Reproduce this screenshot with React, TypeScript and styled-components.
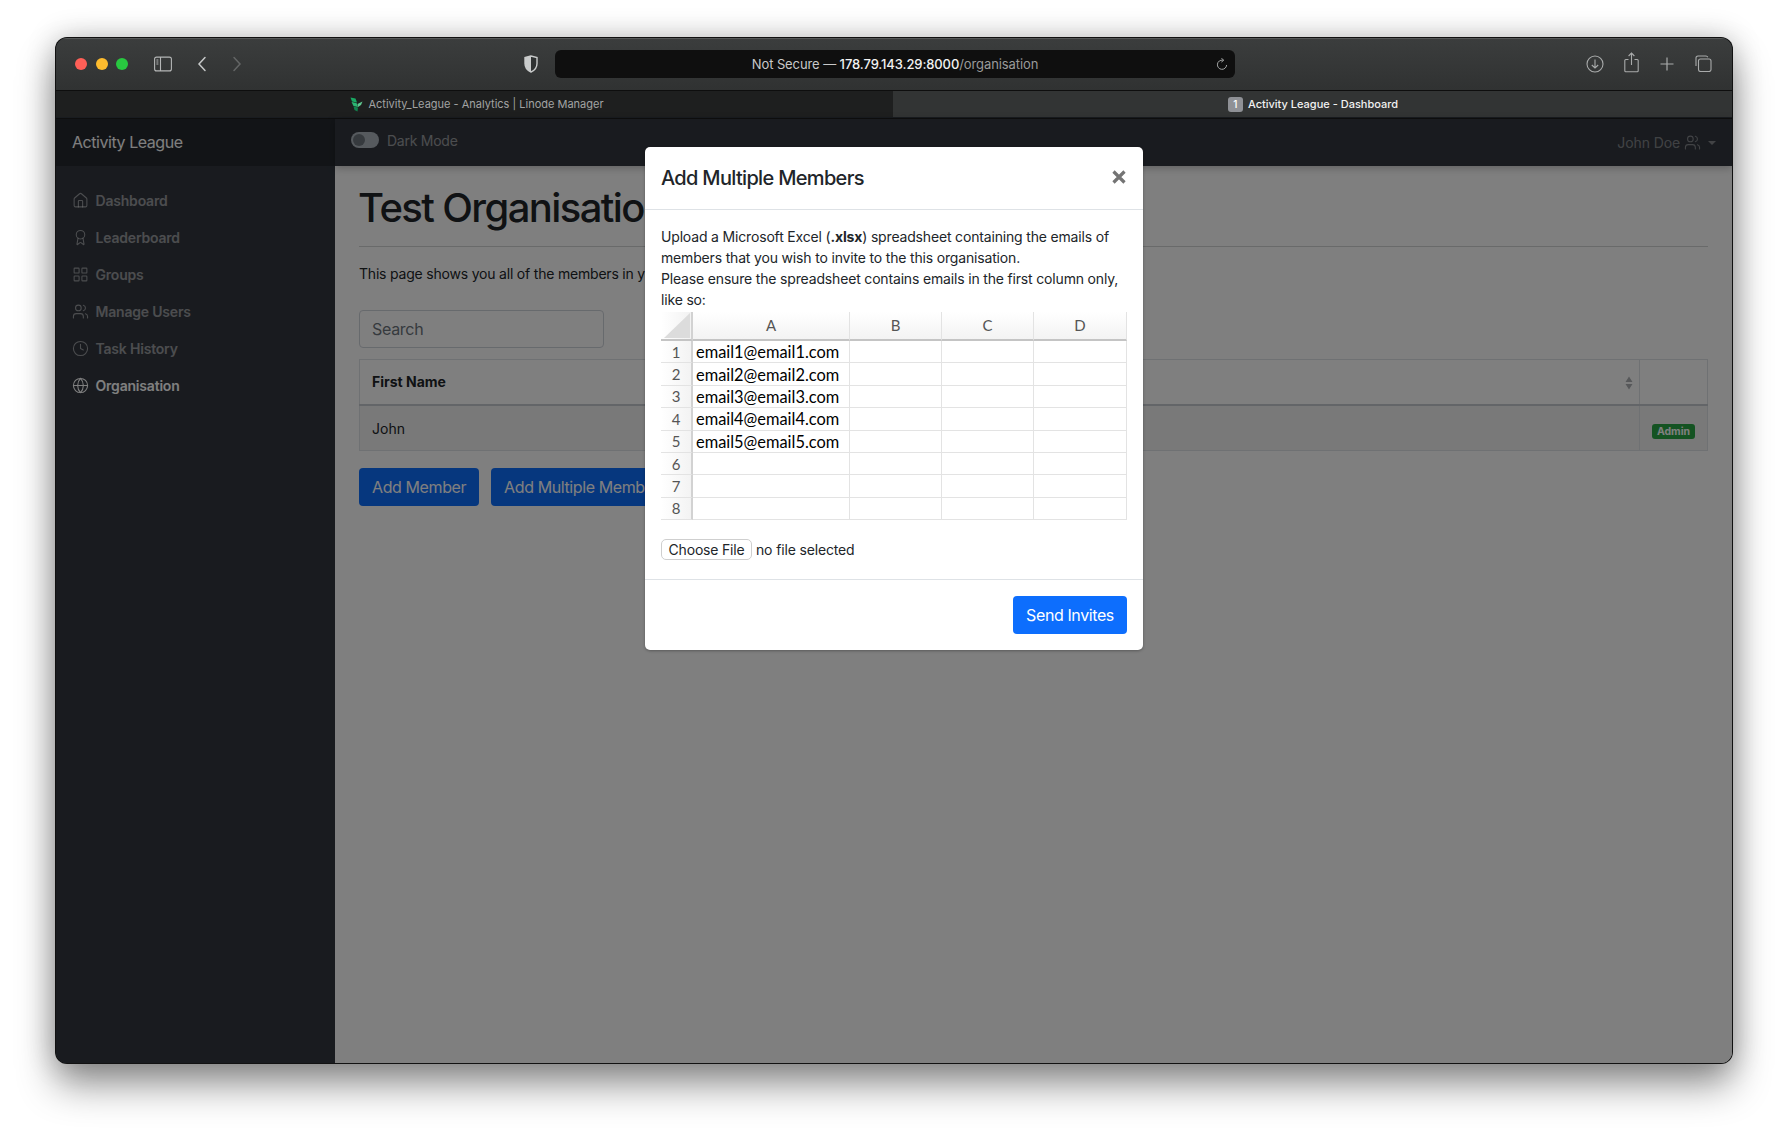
import styled, { createGlobalStyle } from "styled-components";
import { Award, Clock, Globe, House, LayoutGrid, Users } from "lucide-react";

const SANS = `Inter, "Liberation Sans", sans-serif`;

const GlobalStyle = createGlobalStyle`
  html, body {
    margin: 0;
    background: #ffffff;
    font-family: ${SANS};
  }
  * {
    box-sizing: border-box;
  }
`;

const NAV_ITEMS = [
  { label: "Dashboard", icon: <House /> },
  { label: "Leaderboard", icon: <Award /> },
  { label: "Groups", icon: <LayoutGrid /> },
  { label: "Manage Users", icon: <Users /> },
  { label: "Task History", icon: <Clock /> },
  { label: "Organisation", icon: <Globe />, active: true },
];

const SHEET_COLS = ["A", "B", "C", "D"];
const SHEET_ROWS = [1, 2, 3, 4, 5, 6, 7, 8];

function Chrome() {
  return (
    <TitleBar>
      <Lights>
        <Light color="#ff5f57" />
        <Light color="#febc2e" />
        <Light color="#28c840" />
      </Lights>
      <ChromeIcon width="18" height="16" viewBox="0 0 18 16" $gap={26}>
        <rect x="0.6" y="1.1" width="16.8" height="13.8" rx="2" fill="none" stroke="#b4b6b6" strokeWidth="1.1" />
        <path d="M6.5 1v14" stroke="#b4b6b6" strokeWidth="1.1" />
        <path d="M2.4 4h2M2.4 6h2M2.4 8h2" stroke="#b4b6b6" strokeWidth="1" />
      </ChromeIcon>
      <ChromeIcon width="10" height="16" viewBox="0 0 10 16" $gap={25}>
        <path d="M8 1.5 2 8l6 6.5" fill="none" stroke="#c6c8c8" strokeWidth="1.5" strokeLinecap="round" />
      </ChromeIcon>
      <ChromeIcon width="10" height="16" viewBox="0 0 10 16" $gap={25}>
        <path d="M2 1.5 8 8l-6 6.5" fill="none" stroke="#636565" strokeWidth="1.5" strokeLinecap="round" />
      </ChromeIcon>
      <ChromeIcon width="16" height="18" viewBox="0 0 16 18" $gap={281}>
        <path d="M8 1 2 2.6v6C2 12.6 4.6 15.6 8 17c3.400-1.400 6-4.400 6-8.400v-6z" fill="#2f3232" stroke="#c9cbcb" strokeWidth="1.4" />
        <path d="M8 1 2 2.6v6C2 12.6 4.600 15.600 8 17z" fill="#c9cbcb" />
      </ChromeIcon>
      <UrlBar>
        <UrlText>
          Not Secure — <UrlHost>178.79.143.29:8000</UrlHost>
          <UrlPath>/organisation</UrlPath>
        </UrlText>
        <ReloadIcon width="12" height="13" viewBox="0 0 12 13">
          <path d="M6.800 2.200A4.600 4.600 0 1 0 10.600 7" fill="none" stroke="#a4a6a6" strokeWidth="1" />
          <path d="M5.400 0.300 7.800 2.200 5.400 4.100" fill="none" stroke="#a4a6a6" strokeWidth="1" />
        </ReloadIcon>
      </UrlBar>
      <ChromeActions>
        <svg width="18" height="18" viewBox="0 0 18 18">
          <circle cx="9" cy="9" r="8" fill="none" stroke="#a9abab" strokeWidth="1.1" />
          <path d="M9 4.500v8.500M5.800 10 9 13l3.200-3" fill="none" stroke="#a9abab" strokeWidth="1.1" />
        </svg>
        <ShareIcon width="15" height="21" viewBox="0 0 15 21">
          <path d="M4.500 7.500H1.800a1 1 0 0 0-1 1v10.200a1 1 0 0 0 1 1h11.400a1 1 0 0 0 1-1V8.500a1 1 0 0 0-1-1h-2.700" fill="none" stroke="#a9abab" strokeWidth="1.1" />
          <path d="M7.500 13V1.200M4.600 4 7.500 1l2.900 3" fill="none" stroke="#a9abab" strokeWidth="1.1" />
        </ShareIcon>
        <svg width="16" height="16" viewBox="0 0 16 16">
          <path d="M8 1.500v13M1.500 8h13" stroke="#a9abab" strokeWidth="1.2" />
        </svg>
        <svg width="17" height="17" viewBox="0 0 17 17">
          <rect x="3.500" y="4" width="12.500" height="12.500" rx="2" fill="none" stroke="#a9abab" strokeWidth="1.1" />
          <path d="M1 11V3a2 2 0 0 1 2-2h8a2 2 0 0 1 1.800 1.200" fill="none" stroke="#a9abab" strokeWidth="1.1" />
        </svg>
      </ChromeActions>
    </TitleBar>
  );
}

function Tabs() {
  return (
    <TabRow>
      <InactiveTab>
        <svg width="13" height="15" viewBox="0 0 13 15">
          <path d="M0.500 0.500 5.500 1.500 7 5.500 2 4.500z" fill="#1aa863" />
          <path d="M1.500 5 6.500 6 8 10 3.500 9z" fill="#2bb673" />
          <path d="M3.500 9.500 8 10.500 7.500 14.500 4.500 13z" fill="#12814d" />
          <path d="M7.500 7 12.500 4.500 11 8 8 10z" fill="#5fc790" />
        </svg>
        Activity_League - Analytics | Linode Manager
      </InactiveTab>
      <ActiveTab>
        <TabBadge>1</TabBadge>
        Activity League - Dashboard
      </ActiveTab>
    </TabRow>
  );
}

function Sidebar() {
  return (
    <SideColumn>
      <Brand>Activity League</Brand>
      <NavList>
        {NAV_ITEMS.map((item) => (
          <NavItem key={item.label} $active={item.active}>
            {item.icon}
            {item.label}
          </NavItem>
        ))}
      </NavList>
    </SideColumn>
  );
}

function Page() {
  return (
    <MainColumn>
      <TopNav>
        <Toggle />
        <ToggleLabel>Dark Mode</ToggleLabel>
        <UserMenu>
          John Doe <Users />
          <Caret />
        </UserMenu>
      </TopNav>
      <Content>
        <PageTitle>Test Organisation</PageTitle>
        <Rule />
        <Lead>This page shows you all of the members in your organisation.</Lead>
        <SearchInput placeholder="Search" />
        <MembersTable>
          <thead>
            <tr>
              <HeadCell>First Name</HeadCell>
              <HeadCell>
                <SortIcon width="8" height="14" viewBox="0 0 8 14">
                  <path d="M4 0.500 7.500 6H0.500zM4 13.500 0.500 8h7z" fill="#aeb1b4" />
                </SortIcon>
              </HeadCell>
              <HeadCell />
            </tr>
          </thead>
          <tbody>
            <tr>
              <BodyCell>John</BodyCell>
              <BodyCell />
              <BodyCell>
                <AdminBadge>Admin</AdminBadge>
              </BodyCell>
            </tr>
          </tbody>
        </MembersTable>
        <ButtonRow>
          <PrimaryButton>Add Member</PrimaryButton>
          <PrimaryButton>Add Multiple Members</PrimaryButton>
        </ButtonRow>
      </Content>
    </MainColumn>
  );
}

function Sheet() {
  return (
    <SheetGrid>
      <SheetCorner>
        <svg width="30" height="27" viewBox="0 0 30 27">
          <path d="M29 1v25H3z" fill="#dcdcdc" />
        </svg>
      </SheetCorner>
      {SHEET_COLS.map((col) => (
        <SheetHead key={col}>{col}</SheetHead>
      ))}
      {SHEET_ROWS.map((row) => (
        <SheetRow key={row}>
          <SheetIndex>{row}</SheetIndex>
          <SheetCell>{row <= 5 ? `email${row}@email${row}.com` : ""}</SheetCell>
          <SheetCell />
          <SheetCell />
          <SheetCell />
        </SheetRow>
      ))}
    </SheetGrid>
  );
}

function UploadModal() {
  return (
    <Backdrop>
      <Modal>
        <ModalHeader>
          <ModalTitle>Add Multiple Members</ModalTitle>
          <CloseIcon width="14" height="14" viewBox="0 0 14 14">
            <path d="M1.500 1.500l11 11M12.500 1.500l-11 11" stroke="#747474" strokeWidth="3.200" />
          </CloseIcon>
        </ModalHeader>
        <ModalBody>
          <ModalText>
            Upload a Microsoft Excel (<b>.xlsx</b>) spreadsheet containing the emails of members that you wish to invite
            to the this organisation.
            <br />
            Please ensure the spreadsheet contains emails in the first column only, like so:
          </ModalText>
          <Sheet />
          <FileRow>
            <FileButton>Choose File</FileButton>
            no file selected
          </FileRow>
        </ModalBody>
        <ModalFooter>
          <SendButton>Send Invites</SendButton>
        </ModalFooter>
      </Modal>
    </Backdrop>
  );
}

export default function App() {
  return (
    <>
      <GlobalStyle />
      <Desktop>
        <BrowserWindow>
          <Chrome />
          <Tabs />
          <Viewport>
            <Sidebar />
            <Page />
            <UploadModal />
          </Viewport>
        </BrowserWindow>
      </Desktop>
    </>
  );
}

const Desktop = styled.div`
  width: 1788px;
  height: 1137px;
  padding: 38px 56px 74px;
  overflow: hidden;
  background: #ffffff;
`;

const BrowserWindow = styled.div`
  display: flex;
  flex-direction: column;
  height: 1025px;
  border-radius: 11px;
  overflow: hidden;
  background: #191c20;
  box-shadow: 0 0 0 1px #111111, 0 22px 38px rgba(0, 0, 0, 0.42), 0 0 30px rgba(0, 0, 0, 0.24);
`;

const TitleBar = styled.div`
  display: flex;
  align-items: center;
  flex: 0 0 53px;
  padding: 0 0 2px 19px;
  border-top: 1px solid #565858;
  border-bottom: 1px solid #0e0e0e;
  background: linear-gradient(#3b3d3d, #303232);
`;

const Lights = styled.div`
  display: flex;
  gap: 8.500px;
`;

const Light = styled.span<{ color: string }>`
  width: 12px;
  height: 12px;
  border-radius: 50%;
  background: ${({ color }) => color};
`;

const ChromeIcon = styled.svg<{ $gap: number }>`
  flex: none;
  margin-left: ${({ $gap }) => $gap}px;
`;

const UrlBar = styled.div`
  position: relative;
  display: flex;
  align-items: center;
  justify-content: center;
  width: 680px;
  height: 28px;
  margin-left: 16px;
  border-radius: 6px;
  background: #0f0f0f;
`;

const UrlText = styled.span`
  font-size: 13px;
  letter-spacing: -0.1px;
  color: #c9c9c9;
`;

const UrlHost = styled.span`
  font-weight: 500;
  color: #f2f2f2;
`;

const UrlPath = styled.span`
  color: #9a9a9a;
`;

const ReloadIcon = styled.svg`
  position: absolute;
  right: 7px;
  top: 8px;
`;

const ChromeActions = styled.div`
  display: flex;
  align-items: center;
  gap: 20px;
  margin-left: auto;
  padding-right: 20px;
`;

const ShareIcon = styled.svg`
  margin-top: -3px;
`;

const TabRow = styled.div`
  display: flex;
  flex: 0 0 28px;
  padding-bottom: 1px;
  border-bottom: 1px solid #0e0e0e;
  font-size: 11px;
`;

const InactiveTab = styled.div`
  display: flex;
  flex: 0 0 837px;
  align-items: center;
  justify-content: center;
  gap: 5px;
  padding-left: 5px;
  background: #1e1f1f;
  color: #a2a3a3;
`;

const ActiveTab = styled.div`
  display: flex;
  flex: 1;
  align-items: center;
  justify-content: center;
  gap: 5px;
  padding-left: 1px;
  background: #323434;
  color: #f1f1f1;
  font-weight: 500;
`;

const TabBadge = styled.span`
  display: flex;
  align-items: center;
  justify-content: center;
  width: 15px;
  height: 15px;
  border-radius: 3px;
  background: #8f9196;
  color: #ffffff;
  font-size: 10px;
`;

const Viewport = styled.div`
  position: relative;
  display: flex;
  flex: 1;
  min-height: 0;
`;

const SideColumn = styled.aside`
  flex: 0 0 279px;
  background: #32373f;
`;

const Brand = styled.div`
  display: flex;
  align-items: center;
  height: 47px;
  padding: 0 0 2px 16px;
  background: rgba(0, 0, 0, 0.25);
  font-size: 16px;
  letter-spacing: -0.45px;
  color: #ffffff;
`;

const NavList = styled.nav`
  display: flex;
  flex-direction: column;
  padding-top: 16px;
`;

const NavItem = styled.div<{ $active?: boolean }>`
  display: flex;
  align-items: center;
  gap: 7px;
  height: 37px;
  padding-left: 15.500px;
  font-size: 14px;
  font-weight: 600;
  letter-spacing: -0.2px;
  color: ${({ $active }) => ($active ? "#ffffff" : "rgba(255, 255, 255, 0.5)")};

  svg {
    width: 17px;
    height: 17px;
    stroke-width: 1.500;
    color: ${({ $active }) => ($active ? "#ffffff" : "rgba(255, 255, 255, 0.5)")};
  }
`;

const MainColumn = styled.main`
  display: flex;
  flex: 1;
  flex-direction: column;
  min-width: 0;
  background: #ffffff;
`;

const TopNav = styled.div`
  display: flex;
  align-items: center;
  flex: 0 0 47px;
  padding: 0 16px;
  background: #32373f;
  box-shadow: 0 2px 8px rgba(0, 0, 0, 0.25);
`;

const Toggle = styled.span`
  position: relative;
  width: 28px;
  height: 16px;
  margin-top: -5px;
  border-radius: 8px;
  background: #adb5bd;

  &::after {
    content: "";
    position: absolute;
    left: 2px;
    top: 2px;
    width: 12px;
    height: 12px;
    border-radius: 50%;
    background: #6c757d;
  }
`;

const ToggleLabel = styled.span`
  margin: -5px 0 0 8px;
  font-size: 14px;
  letter-spacing: -0.25px;
  color: rgba(255, 255, 255, 0.5);
`;

const UserMenu = styled.div`
  display: flex;
  align-items: center;
  gap: 4px;
  margin-left: auto;
  font-size: 14px;
  letter-spacing: -0.1px;
  color: rgba(255, 255, 255, 0.4);

  svg {
    width: 17px;
    height: 17px;
    margin-right: 3px;
    stroke-width: 1.500;
  }
`;

const Caret = styled.span`
  border-top: 4px solid rgba(255, 255, 255, 0.4);
  border-left: 4px solid transparent;
  border-right: 4px solid transparent;
`;

const Content = styled.div`
  display: flex;
  flex-direction: column;
  align-items: flex-start;
  padding: 18px 24px 0;
`;

const PageTitle = styled.h1`
  margin: 0 0 0 -1px;
  font-size: 40px;
  font-weight: 500;
  line-height: 48px;
  letter-spacing: -1.600px;
  color: #212529;
  white-space: nowrap;
`;

const Rule = styled.div`
  width: 100%;
  height: 1px;
  margin-top: 14px;
  background: #d3d4d5;
`;

const Lead = styled.p`
  margin: 16px 0 0;
  font-size: 14px;
  line-height: 21px;
  letter-spacing: -0.2px;
  color: #212529;
`;

const SearchInput = styled.input`
  width: 245px;
  height: 38px;
  margin-top: 26px;
  padding: 0 12px;
  border: 1px solid #ced4da;
  border-radius: 4px;
  background: #ffffff;
  font-family: inherit;
  font-size: 16px;
  letter-spacing: -0.3px;

  &::placeholder {
    color: #6c757d;
  }
`;

const MembersTable = styled.table`
  width: 100%;
  margin-top: 11px;
  border-collapse: collapse;
  font-size: 14px;
  color: #212529;
`;

const HeadCell = styled.th`
  height: 45px;
  padding: 0 12px 1px;
  border: 1px solid #dee2e6;
  border-bottom: 2px solid #c6cbd0;
  text-align: left;
  font-weight: 700;
  white-space: nowrap;

  &:first-child {
    width: 500px;
  }
  &:nth-child(2) {
    text-align: right;
    padding-right: 6px;
  }
  &:last-child {
    width: 68px;
  }
`;

const SortIcon = styled.svg`
  display: inline-block;
  vertical-align: middle;
`;

const BodyCell = styled.td`
  height: 46px;
  padding: 2px 12px 0;
  border: 1px solid #dee2e6;
  background: rgba(0, 0, 0, 0.05);
`;

const AdminBadge = styled.span`
  display: block;
  width: 43px;
  height: 15px;
  margin-top: 6px;
  border-radius: 3px;
  background: #28a745;
  color: #ffffff;
  font-size: 10.500px;
  font-weight: 700;
  line-height: 15px;
  text-align: center;
`;

const ButtonRow = styled.div`
  display: flex;
  gap: 12px;
  margin-top: 17px;
`;

const PrimaryButton = styled.button`
  height: 38px;
  padding: 0 13px;
  border: none;
  border-radius: 4px;
  background: #0d6efd;
  color: #ffffff;
  font-family: inherit;
  font-size: 16px;
  letter-spacing: -0.4px;
`;

const Backdrop = styled.div`
  position: absolute;
  inset: 0;
  display: flex;
  justify-content: center;
  align-items: flex-start;
  padding-top: 28px;
  background: rgba(0, 0, 0, 0.5);
`;

const Modal = styled.div`
  width: 498px;
  border-radius: 5px;
  background: #ffffff;
  color: #212529;
  box-shadow: 0 1px 3px rgba(0, 0, 0, 0.3);
`;

const ModalHeader = styled.div`
  display: flex;
  align-items: center;
  justify-content: space-between;
  height: 63px;
  padding: 0 16px;
  border-bottom: 1px solid #dee2e6;
`;

const ModalTitle = styled.h5`
  margin: 0;
  font-size: 20px;
  font-weight: 500;
  letter-spacing: -0.680px;
`;

const CloseIcon = styled.svg`
  margin: -2px 1px 0 0;
`;

const ModalBody = styled.div`
  padding: 16px 16px 19px;
`;

const ModalText = styled.p`
  margin: 0;
  font-size: 14px;
  line-height: 21px;
  letter-spacing: -0.170px;

  b {
    font-weight: 700;
  }
`;

const SheetGrid = styled.div`
  display: flex;
  flex-wrap: wrap;
  width: 466px;
  margin-top: 2px;
  font-family: Lato, "Liberation Sans", sans-serif;
  font-size: 16.400px;
  color: #000000;
`;

const SheetCorner = styled.div`
  display: flex;
  flex: 0 0 32px;
  height: 29px;
  border-right: 2px solid #d2d2d2;
  border-bottom: 2px solid #c4c4c4;
  background: linear-gradient(90deg, #ffffff, #f2f2f2);
`;

const SheetHead = styled.div`
  display: flex;
  align-items: center;
  justify-content: center;
  height: 29px;
  width: 92px;
  padding-bottom: 1px;
  border-right: 1px solid #e3e3e3;
  border-bottom: 2px solid #c4c4c4;
  background: linear-gradient(#ffffff, #f3f3f3);
  color: #555555;
  font-size: 15px;

  &:nth-child(2) {
    width: 157px;
  }
  &:nth-child(5) {
    width: 93px;
  }
`;

const SheetRow = styled.div`
  display: grid;
  grid-template-columns: 32px 157px 92px 92px 93px;
  width: 100%;
  height: 22.400px;
`;

const SheetIndex = styled.div`
  display: flex;
  align-items: center;
  justify-content: center;
  border-right: 2px solid #d2d2d2;
  border-bottom: 1px solid #e3e3e3;
  background: linear-gradient(90deg, #ffffff, #f3f3f3);
  color: #555555;
  font-size: 15px;
`;

const SheetCell = styled.div`
  display: flex;
  align-items: center;
  padding-left: 3px;
  border-right: 1px solid #e3e3e3;
  border-bottom: 1px solid #e3e3e3;
`;

const FileRow = styled.div`
  display: flex;
  align-items: center;
  gap: 4px;
  margin-top: 19px;
  font-size: 14px;
  letter-spacing: -0.150px;
`;

const FileButton = styled.button`
  width: 91px;
  height: 21px;
  padding: 0;
  border: 1px solid #cfcfcf;
  border-radius: 5px;
  background: #ffffff;
  color: #212529;
  font-family: inherit;
  font-size: 14px;
  letter-spacing: -0.200px;
`;

const ModalFooter = styled.div`
  display: flex;
  justify-content: flex-end;
  height: 71px;
  padding: 16px 16px 0;
  border-top: 1px solid #dee2e6;
`;

const SendButton = styled(PrimaryButton)`
  width: 114px;
  padding: 0;
`;
